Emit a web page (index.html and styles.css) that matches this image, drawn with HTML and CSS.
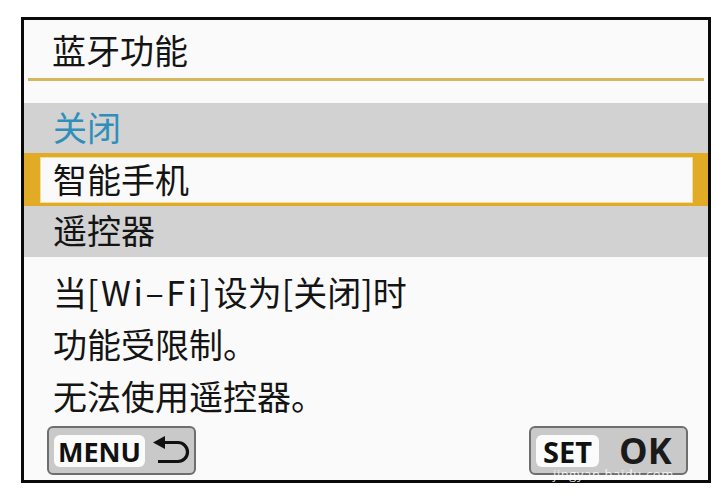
FILE: index.html
```html
<!DOCTYPE html>
<html lang="zh">
<head>
<meta charset="utf-8">
<title>蓝牙功能</title>
<link rel="stylesheet" href="styles.css">
</head>
<body>
<div class="screen">
  <div class="title">蓝牙功能</div>
  <div class="rule"></div>
  <div class="menu">
    <div class="row row-gray row-current">关闭</div>
    <div class="row row-sel"><span>智能手机</span></div>
    <div class="row row-gray">遥控器</div>
  </div>
  <div class="note">
    <div class="line">当<span class="lat">[Wi–Fi]</span>设为[关闭]时</div>
    <div class="line">功能受限制。</div>
    <div class="line">无法使用遥控器。</div>
  </div>
  <div class="bottom">
    <div class="btn">
      <span class="label">MENU</span>
      <svg class="ret" width="38" height="30" viewBox="0 0 38 30">
        <path d="M0 6.5 L12 0 L12 13 Z" fill="#111"/>
        <path d="M11 6.5 H25 A9.5 9.5 0 0 1 25 25.5 H5" fill="none" stroke="#111" stroke-width="3.2"/>
      </svg>
    </div>
    <div class="btn btn-set">
      <span class="label">SET</span>
      <span class="ok">OK</span>
      <span class="wm">jingyan.baidu.com</span>
    </div>
  </div>
</div>
</body>
</html>
```
FILE: styles.css
```css
html, body {
  margin: 0;
  padding: 0;
  background: #ffffff;
}
body {
  padding: 17px 0 0 21px;
  font-family: "Noto Sans CJK SC", "Noto Sans", sans-serif;
  color: #141414;
}
.screen {
  width: 684px;
  height: 460px;
  border: 3px solid #0a0a0a;
  background: #fafafa;
  display: flex;
  flex-direction: column;
}
.title {
  height: 58px;
  line-height: 58px;
  font-size: 34px;
  padding-left: 28px;
  padding-top: 1px;
  box-sizing: border-box;
}
.rule {
  height: 3px;
  margin: 0 4px;
  background: #d6b75e;
}
.menu {
  margin-top: 22px;
  display: flex;
  flex-direction: column;
}
.row {
  font-size: 34px;
  padding-left: 29px;
  box-sizing: border-box;
}
.row-gray {
  background: #d2d2d2;
  height: 50px;
  line-height: 48px;
}
.row-gray + .row-sel + .row-gray {
  height: 51px;
}
.row-current {
  color: #2f8fba;
}
.row-sel {
  height: 53px;
  background: #e2ab25;
  padding: 4px 15px 3px 16px;
  display: flex;
}
.row-sel span {
  flex: 1;
  background: #fafafa;
  line-height: 44px;
  padding-left: 13px;
  box-shadow: inset 0 0 0 1px #f3dc9c;
}
.note {
  padding: 9px 0 0 29px;
  font-size: 34px;
}
.line {
  height: 52px;
  line-height: 52px;
}
.lat {
  letter-spacing: 2.6px;
}
.bottom {
  margin-top: 4px;
  padding: 0 20px 0 23px;
  display: flex;
  justify-content: space-between;
}
.btn {
  height: 49px;
  box-sizing: border-box;
  border: 2px solid #6e6e6e;
  border-radius: 6px;
  background: #c9c9c9;
  display: flex;
  align-items: center;
  padding: 0 4px 0 5px;
  gap: 8px;
  position: relative;
}
.btn:first-child {
  width: 149px;
}
.btn-set {
  width: 159px;
  gap: 20px;
}
.label {
  flex-shrink: 0;
  background: #fbfbfb;
  border-radius: 6px;
  height: 32px;
  line-height: 33px;
  padding: 0 4px;
  font-family: "Open Sans", "Liberation Sans", sans-serif;
  font-weight: 700;
  font-size: 27px;
  color: #111;
}
.btn-set .label {
  width: 63px;
  box-sizing: border-box;
  text-align: center;
  padding: 0;
  font-size: 29px;
}
.ret {
  flex-shrink: 0;
  display: block;
  margin-top: 1px;
}
.ok {
  font-family: "Open Sans", "Liberation Sans", sans-serif;
  font-weight: 700;
  font-size: 36px;
  color: #1a1a1a;
  line-height: 32px;
  height: 32px;
}
.wm {
  position: absolute;
  left: 22px;
  bottom: -7px;
  line-height: 12px;
  font-family: "Open Sans", "Liberation Sans", sans-serif;
  font-size: 13px;
  color: rgba(255, 255, 255, 0.85);
  letter-spacing: 0.6px;
}
```
